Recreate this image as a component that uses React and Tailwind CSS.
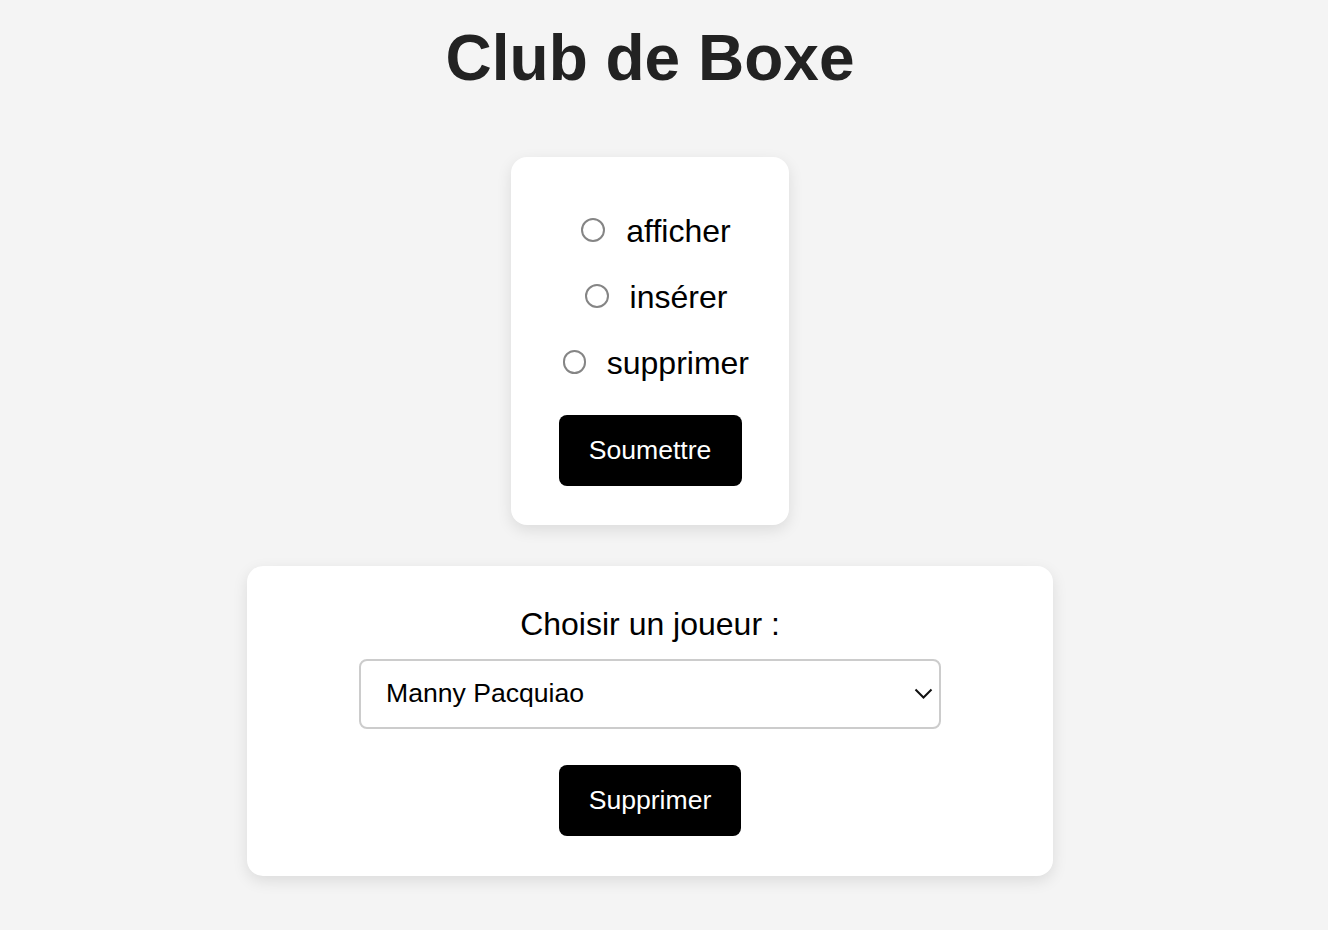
import React, { useState } from "react";

const font = { fontFamily: '"Liberation Sans", Arial, sans-serif' };

function Radio({ label, value, checked, onChange }) {
  return (
    <label className="flex items-center justify-center h-[37px] my-[14.5px] cursor-pointer">
      <input
        type="radio"
        name="action"
        value={value}
        checked={checked}
        onChange={onChange}
        className="appearance-none w-[24px] h-[24px] rounded-full border-2 border-[#858585] bg-white ml-[12px] mr-[21px] checked:border-[7px] checked:border-[#0075ff] cursor-pointer"
      />
      <span className="text-[32px] leading-[37px] text-black pt-[2px]">{label}</span>
    </label>
  );
}

export default function App() {
  const [action, setAction] = useState("");
  const [joueur, setJoueur] = useState("Manny Pacquiao");

  return (
    <div className="min-h-screen w-full bg-[#f4f4f4] flex flex-col items-center pr-[28px] pb-[54px]" style={font}>
      <h1 className="text-[64px] leading-[74px] font-bold text-[#222222] mt-[21px] mb-[62px]">Club de Boxe</h1>

      <div className="w-[278px] bg-white rounded-[16px] shadow-[0_5px_15px_rgba(0,0,0,0.1)] px-[40px] pt-[40px] pb-[39px] flex flex-col items-center">
        <div className="flex flex-col w-full">
          <Radio label="afficher" value="afficher" checked={action === "afficher"} onChange={() => setAction("afficher")} />
          <Radio label="insérer" value="inserer" checked={action === "inserer"} onChange={() => setAction("inserer")} />
          <Radio label="supprimer" value="supprimer" checked={action === "supprimer"} onChange={() => setAction("supprimer")} />
        </div>
        <button className="mt-[20px] w-[183px] h-[71px] bg-black text-white text-[26.6px] rounded-[8px] cursor-pointer">
          Soumettre
        </button>
      </div>

      <div className="w-[806px] mt-[41px] bg-white rounded-[16px] shadow-[0_5px_15px_rgba(0,0,0,0.1)] px-[40px] pt-[40px] pb-[40px] flex flex-col items-center">
        <label className="text-[32px] leading-[37px] text-black">Choisir un joueur :</label>
        <div className="relative mt-[16px] w-[582px]">
          <select
            value={joueur}
            onChange={(e) => setJoueur(e.target.value)}
            className="appearance-none w-full h-[70px] border-2 border-[#cccccc] rounded-[8px] bg-white pl-[25px] pr-[50px] text-[26.6px] text-black outline-none"
            style={font}
          >
            <option>Manny Pacquiao</option>
            <option>Muhammad Ali</option>
            <option>Mike Tyson</option>
            <option>Floyd Mayweather</option>
          </select>
          <svg
            className="absolute right-[8px] top-[29px] pointer-events-none"
            width="19"
            height="11"
            viewBox="0 0 19 11"
            fill="none"
          >
            <path d="M1.5 1.5 L9.5 9.5 L17.5 1.5" stroke="#111" strokeWidth="2" />
          </svg>
        </div>
        <button className="mt-[36px] w-[182px] h-[71px] bg-black text-white text-[26.6px] rounded-[8px] cursor-pointer">
          Supprimer
        </button>
      </div>
    </div>
  );
}
